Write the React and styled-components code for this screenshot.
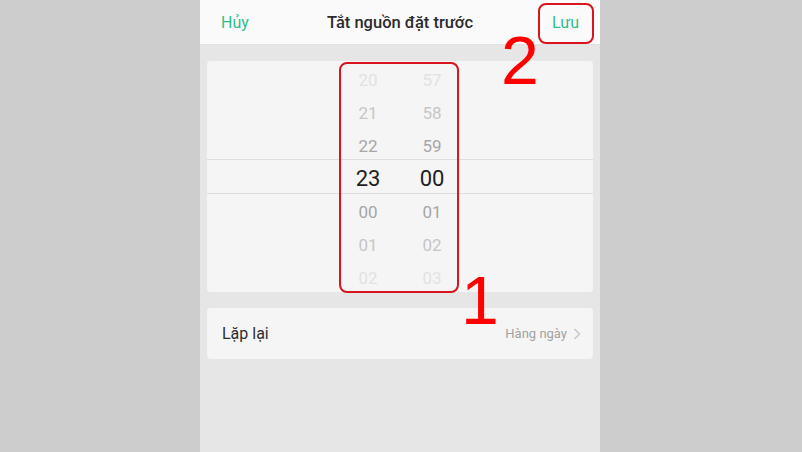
import React from "react"
import styled, { createGlobalStyle } from "styled-components"

const GlobalStyle = createGlobalStyle`
  html, body {
    margin: 0;
    padding: 0;
    background: #cdcdcd;
    font-family: Roboto, "Noto Sans", sans-serif;
  }
`

const Page = styled.div`
  display: flex;
  padding-left: 200px;
  width: 802px;
  height: 452px;
  box-sizing: border-box;
  overflow: hidden;
  background: #cdcdcd;
`

const Phone = styled.div`
  position: relative;
  width: 400px;
  height: 452px;
  background: #e6e6e6;
  display: flex;
  flex-direction: column;
`

const Header = styled.div`
  height: 45px;
  background: #fafafa;
  border-bottom: 1px solid #e2e2e2;
  display: flex;
  align-items: center;
  justify-content: space-between;
  padding: 0 21px;
  box-sizing: border-box;
`

const HeaderButton = styled.span`
  color: #2fbd8a;
  font-size: 16px;
  width: 40px;
  text-align: ${props => (props.right ? "right" : "left")};
`

const Title = styled.span`
  color: #2b2b2b;
  font-size: 16.5px;
  font-weight: 500;
`

const Body = styled.div`
  display: flex;
  flex-direction: column;
  gap: 16px;
  padding: 16px 7px 0;
`

const Card = styled.div`
  position: relative;
  background: #f5f5f5;
  border-radius: 4px;
`

const Picker = styled(Card)`
  height: 231px;
  display: flex;
  justify-content: center;
`

const Band = styled.div`
  position: absolute;
  left: 0;
  right: 0;
  top: 98px;
  height: 33px;
  border-top: 1px solid #dedede;
  border-bottom: 1px solid #dedede;
`

const Column = styled.div`
  width: 64px;
  display: flex;
  flex-direction: column;
`

const Cell = styled.div`
  height: 33px;
  display: flex;
  align-items: center;
  justify-content: center;
  font-size: ${props => (props.d === 0 ? "22px" : "17px")};
  color: ${props =>
    ["#1e1e1e", "#a6a6a6", "#c6c6c6", "#e2e2e2"][props.d]};
  padding-top: ${props => (props.d === 0 ? "3px" : "4px")};
  box-sizing: border-box;
`

const RepeatRow = styled(Card)`
  height: 51px;
  display: flex;
  align-items: center;
  padding: 0 12px 0 15px;
`

const Label = styled.span`
  flex: 1;
  color: #2e2e2e;
  font-size: 16px;
`

const Value = styled.span`
  color: #a2a2a2;
  font-size: 13px;
  margin-right: 6px;
`

const Highlight = styled.div`
  position: absolute;
  border: 2px solid #d9141c;
  border-radius: 8px;
  box-sizing: border-box;
`

const Marker = styled.span`
  position: absolute;
  color: #ff0000;
  font-family: "Liberation Sans", Arial, sans-serif;
  font-size: 68px;
  line-height: 1;
`

const hours = ["20", "21", "22", "23", "00", "01", "02"]
const minutes = ["57", "58", "59", "00", "01", "02", "03"]

const Chevron = () => (
  <svg width="8" height="12" viewBox="0 0 8 12">
    <path d="M1.5 1 L6.5 6 L1.5 11" fill="none" stroke="#c4c4c4" strokeWidth="1.3" />
  </svg>
)

const App = () => (
  <>
    <GlobalStyle />
    <Page>
      <Phone>
        <Header>
          <HeaderButton>Hủy</HeaderButton>
          <Title>Tắt nguồn đặt trước</Title>
          <HeaderButton right>Lưu</HeaderButton>
        </Header>
        <Body>
          <Picker>
            <Band />
            <Column>
              {hours.map((h, i) => (
                <Cell key={i} d={Math.abs(i - 3)}>{h}</Cell>
              ))}
            </Column>
            <Column>
              {minutes.map((m, i) => (
                <Cell key={i} d={Math.abs(i - 3)}>{m}</Cell>
              ))}
            </Column>
          </Picker>
          <RepeatRow>
            <Label>Lặp lại</Label>
            <Value>Hàng ngày</Value>
            <Chevron />
          </RepeatRow>
        </Body>
        <Highlight style={{ left: 139, top: 62, width: 120, height: 231 }} />
        <Highlight style={{ left: 338, top: 3, width: 56, height: 41 }} />
        <Marker style={{ left: 301, top: 26 }}>2</Marker>
        <Marker style={{ left: 261, top: 266 }}>1</Marker>
      </Phone>
    </Page>
  </>
)

export default App
